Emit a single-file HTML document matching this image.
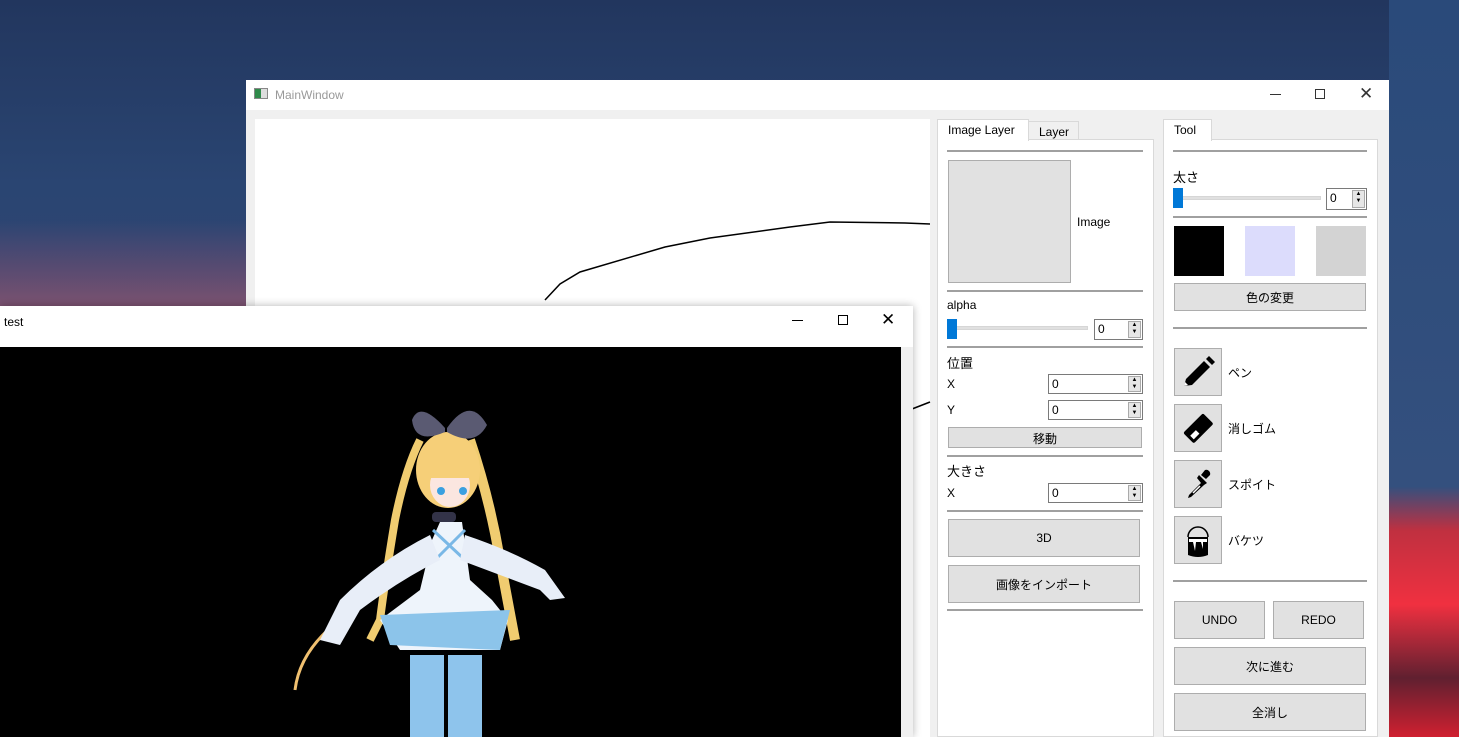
<!DOCTYPE html>
<html><head><meta charset="utf-8"><style>
*{box-sizing:border-box;margin:0;padding:0}
body{width:1459px;height:737px;overflow:hidden;position:relative;font-family:"Liberation Sans","Noto Sans CJK JP",sans-serif;font-size:12px;color:#000;
background:linear-gradient(180deg,#22365e 0%,#2a4572 25%,#2f4473 40%,#5a4a70 60%,#2a3050 100%)}
.abs{position:absolute}
.line{position:absolute;height:2px;background:#a0a0a0}
.spin{position:absolute;background:#fff;border:1px solid #7a7a7a;font-size:12px;padding:2px 0 0 3px}
.spin i{position:absolute;right:1px;top:1px;width:13px;bottom:1px;background:#e6e6e6;border:1px solid #aaa;font-style:normal;font-size:6px;line-height:7px;text-align:center;color:#000}
.btn{position:absolute;background:#e1e1e1;border:1px solid #adadad;text-align:center;font-size:12px}
.slider{position:absolute;height:4px;background:#e0e0e0;border:1px solid #d6d6d6}
.handle{position:absolute;width:10px;height:20px;background:#0078d7}
.tool{position:absolute;width:48px;height:48px;background:#e1e1e1;border:1px solid #adadad}
.lbl{position:absolute;font-size:12px}
</style></head><body>
<div class="abs" style="left:1389px;top:0;width:70px;height:737px;background:linear-gradient(180deg,#2a4a7a 0%,#34507e 66%,#c03040 72%,#f03040 82%,#602030 92%,#d02030 100%)"></div>
<div class="abs" style="left:0;top:220px;width:246px;height:90px;background:linear-gradient(180deg,rgba(120,80,110,0) 0%,rgba(150,85,110,.45) 60%,rgba(190,95,110,.55) 100%)"></div>

<div class="abs" style="left:246px;top:80px;width:1143px;height:657px;background:#f0f0f0">
  <div class="abs" style="left:0;top:0;width:1143px;height:30px;background:#fff"></div>
  <div class="abs" style="left:8px;top:8px;width:14px;height:11px;border:1px solid #888;background:linear-gradient(90deg,#2f8a4a 50%,#ddd 50%)"></div>
  <div class="lbl" style="left:29px;top:8px;color:#999">MainWindow</div>
  <div class="abs" style="left:1024px;top:14px;width:11px;height:1px;background:#333"></div>
  <div class="abs" style="left:1069px;top:9px;width:10px;height:10px;border:1px solid #333"></div>
  <div class="abs" style="left:1113px;top:4px;font-size:17px;color:#333">✕</div>
  <div class="abs" style="left:9px;top:39px;width:675px;height:618px;background:#fff"></div>
</div>
<svg class="abs" style="left:0;top:0" width="1459" height="737"><path d="M930 224 L905 223 L830 222 L790 227 L710 238 L665 247 L580 272 L560 284 L545 300" fill="none" stroke="#000" stroke-width="1.5"/><path d="M912 409 L930 402" stroke="#000" stroke-width="1.5"/></svg>

<div class="abs" style="left:937px;top:139px;width:217px;height:598px;background:#fff;border:1px solid #d9d9d9"></div>
<div class="abs" style="left:937px;top:119px;width:92px;height:22px;background:#fff;border:1px solid #d9d9d9;border-bottom:none;padding:3px 0 0 10px">Image Layer</div>
<div class="abs" style="left:1028px;top:121px;width:51px;height:19px;background:#f0f0f0;border:1px solid #d9d9d9;padding:3px 0 0 10px">Layer</div>
<div class="line" style="left:947px;top:150px;width:196px"></div>
<div class="abs" style="left:948px;top:160px;width:123px;height:123px;background:#e1e1e1;border:1px solid #adadad"></div>
<div class="lbl" style="left:1077px;top:215px">Image</div>
<div class="line" style="left:947px;top:290px;width:196px"></div>
<div class="lbl" style="left:947px;top:298px">alpha</div>
<div class="slider" style="left:950px;top:326px;width:138px"></div>
<div class="handle" style="left:947px;top:319px"></div>
<div class="spin" style="left:1094px;top:319px;width:49px;height:21px">0<i>▲<br>▼</i></div>
<div class="line" style="left:947px;top:346px;width:196px"></div>
<div class="lbl" style="left:947px;top:353px;font-size:13px">位置</div>
<div class="lbl" style="left:947px;top:377px">X</div>
<div class="spin" style="left:1048px;top:374px;width:95px;height:20px">0<i>▲<br>▼</i></div>
<div class="lbl" style="left:947px;top:403px">Y</div>
<div class="spin" style="left:1048px;top:400px;width:95px;height:20px">0<i>▲<br>▼</i></div>
<div class="btn" style="left:948px;top:427px;width:194px;height:21px;padding-top:2px">移動</div>
<div class="line" style="left:947px;top:455px;width:196px"></div>
<div class="lbl" style="left:947px;top:461px;font-size:13px">大きさ</div>
<div class="lbl" style="left:947px;top:486px">X</div>
<div class="spin" style="left:1048px;top:483px;width:95px;height:20px">0<i>▲<br>▼</i></div>
<div class="line" style="left:947px;top:510px;width:196px"></div>
<div class="btn" style="left:948px;top:519px;width:192px;height:38px;padding-top:11px">3D</div>
<div class="btn" style="left:948px;top:565px;width:192px;height:38px;padding-top:10px">画像をインポート</div>
<div class="line" style="left:947px;top:609px;width:196px"></div>

<div class="abs" style="left:1163px;top:139px;width:215px;height:598px;background:#fff;border:1px solid #d9d9d9"></div>
<div class="abs" style="left:1163px;top:119px;width:49px;height:22px;background:#fff;border:1px solid #d9d9d9;border-bottom:none;padding:3px 0 0 10px">Tool</div>
<div class="line" style="left:1173px;top:150px;width:194px"></div>
<div class="lbl" style="left:1173px;top:167px;font-size:13px">太さ</div>
<div class="slider" style="left:1176px;top:196px;width:145px"></div>
<div class="handle" style="left:1173px;top:188px"></div>
<div class="spin" style="left:1326px;top:188px;width:41px;height:22px">0<i>▲<br>▼</i></div>
<div class="line" style="left:1173px;top:216px;width:194px"></div>
<div class="abs" style="left:1174px;top:226px;width:50px;height:50px;background:#000"></div>
<div class="abs" style="left:1245px;top:226px;width:50px;height:50px;background:#dcdcfc"></div>
<div class="abs" style="left:1316px;top:226px;width:50px;height:50px;background:#d3d3d3"></div>
<div class="btn" style="left:1174px;top:283px;width:192px;height:28px;padding-top:5px">色の変更</div>
<div class="line" style="left:1173px;top:327px;width:194px"></div>
<div class="tool" style="left:1174px;top:348px"><svg width="46" height="46"><path d="M9 37 L11 30 L29 12 L35 18 L17 36 Z" fill="#000"/><path d="M31 10 L34 7 L40 13 L37 16 Z" fill="#000"/><path d="M9 37 L10 33 L13 36Z" fill="#fff"/></svg></div>
<div class="lbl" style="left:1228px;top:364px">ペン</div>
<div class="tool" style="left:1174px;top:404px"><svg width="46" height="46"><g transform="rotate(-45 23 23)"><rect x="9" y="16" width="28" height="15" rx="2" fill="#000"/><rect x="12" y="23" width="8" height="5" fill="#fff"/></g></svg></div>
<div class="lbl" style="left:1228px;top:420px">消しゴム</div>
<div class="tool" style="left:1174px;top:460px"><svg width="46" height="46"><path d="M30 9 a4 4 0 0 1 5 5 L31 18 L26 14Z" fill="#000"/><path d="M24 14 L32 22 L29 24 L16 36 L13 37 L14 34 L26 22 L22 17Z" fill="#000"/><path d="M18 32 L25 25" stroke="#fff" stroke-width="1.5"/></svg></div>
<div class="lbl" style="left:1228px;top:476px">スポイト</div>
<div class="tool" style="left:1174px;top:516px"><svg width="46" height="46"><path d="M13 20 a10 10 0 0 1 20 0" fill="none" stroke="#000" stroke-width="1.5"/><path d="M13 20 L33 20 L33 38 Q23 42 13 38Z" fill="#000"/><path d="M14 22 L32 22 L32 25 L28 25 L28 32 L26 25 L21 25 L20 34 L18 25 L14 25Z" fill="#fff"/></svg></div>
<div class="lbl" style="left:1228px;top:532px">バケツ</div>
<div class="line" style="left:1173px;top:580px;width:194px"></div>
<div class="btn" style="left:1174px;top:601px;width:91px;height:38px;padding-top:11px">UNDO</div>
<div class="btn" style="left:1273px;top:601px;width:91px;height:38px;padding-top:11px">REDO</div>
<div class="btn" style="left:1174px;top:647px;width:192px;height:38px;padding-top:10px">次に進む</div>
<div class="btn" style="left:1174px;top:693px;width:192px;height:38px;padding-top:10px">全消し</div>

<div class="abs" style="left:0;top:306px;width:913px;height:431px;background:#f0f0f0;box-shadow:0 0 8px rgba(0,0,0,.3)">
  <div class="abs" style="left:0;top:0;width:913px;height:41px;background:#fff"></div>
  <div class="lbl" style="left:4px;top:9px">test</div>
  <div class="abs" style="left:792px;top:14px;width:11px;height:1px;background:#000"></div>
  <div class="abs" style="left:838px;top:9px;width:10px;height:10px;border:1px solid #000"></div>
  <div class="abs" style="left:881px;top:4px;font-size:17px">✕</div>
  <div class="abs" style="left:0;top:41px;width:901px;height:390px;background:#000"></div>
</div>
<svg class="abs" style="left:0;top:0" width="912" height="737">
  <path d="M420 440 Q405 470 395 520 Q385 580 380 620 L370 640" stroke="#f0cc70" stroke-width="8" fill="none"/>
  <path d="M470 440 Q490 500 500 560 L515 640" stroke="#f0cc70" stroke-width="10" fill="none"/>
  <path d="M340 620 Q300 650 295 690" stroke="#f0c070" stroke-width="3" fill="none"/>
  <ellipse cx="448" cy="470" rx="32" ry="38" fill="#f6cf78"/>
  <ellipse cx="450" cy="485" rx="20" ry="22" fill="#fbe6e0"/>
  <path d="M430 470 Q450 455 470 470 L470 478 L430 478Z" fill="#f6cf78"/>
  <circle cx="441" cy="491" r="4" fill="#3aa0e0"/><circle cx="463" cy="491" r="4" fill="#3aa0e0"/>
  <path d="M445 428 Q420 400 412 420 Q415 445 445 432Z" fill="#5a5a72"/>
  <path d="M447 428 Q470 395 487 425 Q475 448 447 432Z" fill="#5a5a72"/>
  <rect x="432" y="512" width="24" height="10" rx="4" fill="#333348"/>
  <path d="M440 522 L462 522 L470 580 L492 600 L508 620 L500 650 L400 650 L380 620 L420 590 L432 540Z" fill="#eef4fb"/>
  <path d="M380 615 L510 610 L500 650 L390 645Z" fill="#8cc4ea"/>
  <path d="M433 530 L465 560 M465 530 L435 560" stroke="#7ab8e6" stroke-width="3"/>
  <path d="M430 535 Q380 560 340 600 L320 640 L340 645 L360 610 Q400 580 440 560Z" fill="#e8eef8"/>
  <path d="M465 535 Q510 550 545 570 L565 598 L550 600 L540 590 Q500 575 460 560Z" fill="#e8eef8"/>
  <rect x="410" y="655" width="34" height="82" fill="#8ec4ec"/>
  <rect x="448" y="655" width="34" height="82" fill="#8ec4ec"/>
</svg>
</body></html>
